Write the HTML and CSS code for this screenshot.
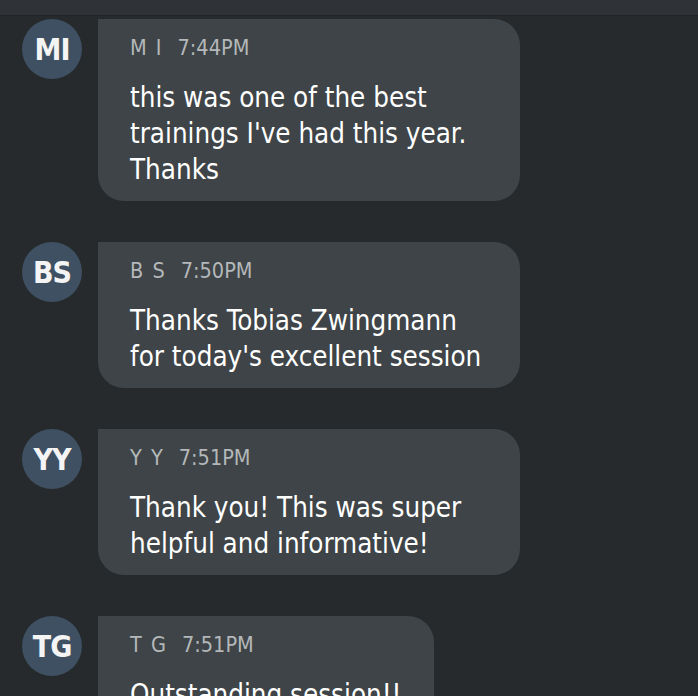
FILE: index.html
```html
<!DOCTYPE html>
<html lang="en">
<head>
    <meta charset="UTF-8">
    <title>Chat</title>
    <link rel="stylesheet" href="styles.css">
</head>
<body>
    <div class="topbar"></div>
    <div class="chat">
        <div class="msg">
            <div class="avatar">MI</div>
            <div class="bubble">
                <div class="meta"><span class="name">M I</span><span class="time">7:44PM</span></div>
                <div class="text">this was one of the best trainings I've had this year. Thanks</div>
            </div>
        </div>
        <div class="msg">
            <div class="avatar">BS</div>
            <div class="bubble">
                <div class="meta"><span class="name">B S</span><span class="time">7:50PM</span></div>
                <div class="text">Thanks Tobias Zwingmann for today's excellent session</div>
            </div>
        </div>
        <div class="msg">
            <div class="avatar">YY</div>
            <div class="bubble">
                <div class="meta"><span class="name">Y Y</span><span class="time">7:51PM</span></div>
                <div class="text">Thank you! This was super helpful and informative!</div>
            </div>
        </div>
        <div class="msg">
            <div class="avatar">TG</div>
            <div class="bubble">
                <div class="meta"><span class="name">T G</span><span class="time">7:51PM</span></div>
                <div class="text">Outstanding session!!</div>
            </div>
        </div>
    </div>
</body>
</html>
```
FILE: styles.css
```css
*{
    margin:0;
    padding:0;
    box-sizing:border-box;
}

body{
    background-color:#262a2d;
    font-family:"DejaVu Sans", sans-serif;
    font-stretch:condensed;
    height:696px;
    overflow:hidden;
}

.topbar{
    height:16px;
    background-color:#2f3337;
    border-bottom:1px solid #212427;
}

.chat{
    display:flex;
    flex-direction:column;
    gap:41px;
    padding:3px 0 0 22px;
}

.msg{
    display:flex;
    align-items:flex-start;
    gap:16px;
}

.avatar{
    width:60px;
    height:60px;
    border-radius:50%;
    background-color:#3e5061;
    color:#f4f4f4;
    font-weight:bold;
    font-size:30px;
    letter-spacing:-1px;
    display:flex;
    align-items:center;
    justify-content:center;
    flex-shrink:0;
}

.bubble{
    max-width:422px;
    background-color:#3e4447;
    border-radius:0 26px 26px 26px;
    padding:16px 32px 14px 32px;
}

.meta{
    color:#b4b8ba;
    font-size:21.5px;
    line-height:26px;
    display:flex;
    gap:16px;
}

.name{
    word-spacing:3px;
}

.text{
    margin-top:18px;
    color:#ffffff;
    font-size:27.5px;
    line-height:36px;
}
```
